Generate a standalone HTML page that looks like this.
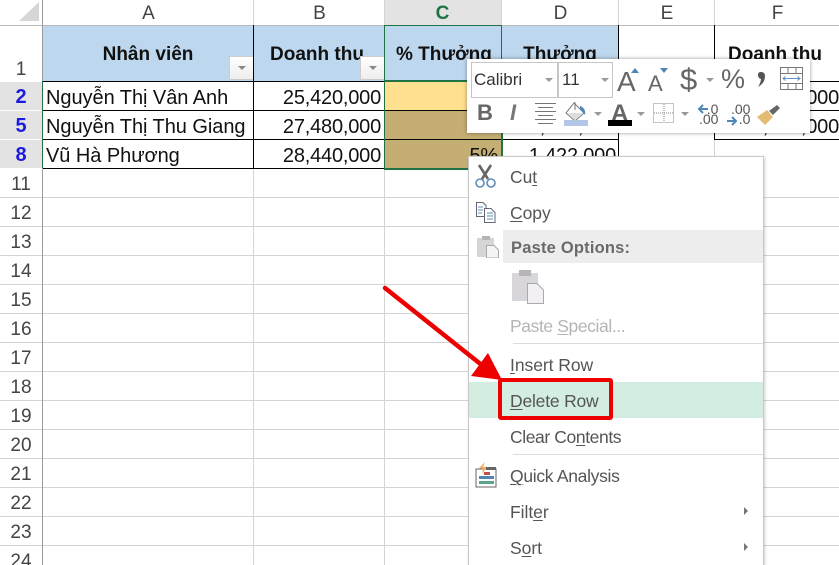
<!DOCTYPE html>
<html><head><meta charset="utf-8">
<style>
html,body{margin:0;padding:0;background:#fff}
#p{position:relative;width:839px;height:565px;overflow:hidden;background:#fff;font-family:"Liberation Sans",sans-serif;color:#000}
.a{position:absolute}
.t{position:absolute;white-space:nowrap;line-height:1}
.hl{position:absolute;left:0;width:839px;height:1px;background:#d4d4d4}
.vl{position:absolute;top:25px;width:1px;height:540px;background:#d4d4d4}
.bk{position:absolute;background:#000}
.col{position:absolute;top:4px;height:20px;font-size:19px;color:#444;text-align:center;line-height:20px}
.row{position:absolute;left:0;width:42px;text-align:center;font-size:19px;color:#444;line-height:20px;height:20px}
.rs{position:absolute;left:0;width:42px;height:28px;background:#e3e3e3;text-align:center;font-size:20px;font-weight:bold;color:#1a1ae0;line-height:30px}
.c{position:absolute;font-size:20px;line-height:20px;white-space:nowrap;color:#111;letter-spacing:-.05px}
.n{position:absolute;font-size:20px;line-height:20px;white-space:nowrap;color:#111;text-align:right;letter-spacing:-.2px}
.h{position:absolute;font-size:19px;font-weight:bold;line-height:20px;white-space:nowrap;color:#111;text-align:center}
.m{position:absolute;left:510px;font-size:17.5px;line-height:20px;white-space:nowrap;color:#555;letter-spacing:-.05px}
.m u{text-underline-offset:2px;text-decoration-thickness:1px}
.fb{position:absolute;background:linear-gradient(#fff,#eeeeee);border:1px solid #ccc;box-sizing:border-box}
.fb:after{content:"";position:absolute;left:8px;top:9px;border:4px solid transparent;border-top:4px solid #888;border-bottom:0}
.dd{position:absolute;border:4px solid transparent;border-top:4px solid #999;border-bottom:0;width:0;height:0}
</style></head>
<body><div id="p">

<!-- header bar -->
<div class="a" style="left:0;top:0;width:839px;height:25px;background:#fff"></div>
<div class="a" style="left:384px;top:0;width:117px;height:25px;background:#e3e3e3"></div>
<svg class="a" style="left:0;top:0" width="42" height="25"><polygon points="19,21 39,21 39,2" fill="#d6d6d6"/></svg>
<div class="col" style="left:43px;width:211px">A</div>
<div class="col" style="left:254px;width:131px">B</div>
<div class="col" style="left:384px;width:117px;font-weight:bold;color:#217346">C</div>
<div class="col" style="left:502px;width:117px">D</div>
<div class="col" style="left:619px;width:96px">E</div>
<div class="col" style="left:715px;width:125px">F</div>

<!-- grid lines -->
<div class="hl" style="top:25px;background:#bbb"></div>
<div class="hl" style="top:197px"></div><div class="hl" style="top:226px"></div><div class="hl" style="top:255px"></div><div class="hl" style="top:284px"></div><div class="hl" style="top:313px"></div><div class="hl" style="top:342px"></div><div class="hl" style="top:371px"></div><div class="hl" style="top:400px"></div><div class="hl" style="top:429px"></div><div class="hl" style="top:458px"></div><div class="hl" style="top:487px"></div><div class="hl" style="top:516px"></div><div class="hl" style="top:545px"></div>
<div class="vl" style="left:253px;top:0;height:565px"></div>
<div class="vl" style="left:384px;top:0;height:565px"></div>
<div class="vl" style="left:501px;top:0;height:565px"></div>
<div class="vl" style="left:618px;top:0;height:565px"></div>
<div class="vl" style="left:714px;top:0;height:565px"></div>
<div class="a" style="left:42px;top:0;width:1px;height:565px;background:#9a9a9a"></div>

<!-- row headers -->
<div class="row" style="top:60px">1</div>
<div class="rs" style="top:82px;line-height:31px">2</div>
<div class="rs" style="top:111px;line-height:31px">5</div>
<div class="rs" style="top:140px;line-height:31px">8</div>
<div class="row" style="top:175px">11</div><div class="row" style="top:204px">12</div><div class="row" style="top:233px">13</div><div class="row" style="top:262px">14</div><div class="row" style="top:291px">15</div><div class="row" style="top:320px">16</div><div class="row" style="top:349px">17</div><div class="row" style="top:378px">18</div><div class="row" style="top:407px">19</div><div class="row" style="top:436px">20</div><div class="row" style="top:465px">21</div><div class="row" style="top:494px">22</div><div class="row" style="top:523px">23</div><div class="row" style="top:552px">24</div>

<!-- table header fill -->
<div class="a" style="left:43px;top:26px;width:458px;height:55px;background:#bdd7ee"></div>
<div class="a" style="left:501px;top:26px;width:117px;height:55px;background:#bdd7ee"></div>
<div class="h" style="left:43px;width:210px;top:45px">Nhân viên</div>
<div class="h" style="left:254px;width:130px;top:45px;text-align:left;text-indent:16px">Doanh thu</div>
<div class="h" style="left:385px;width:116px;top:45px;text-align:left;text-indent:11px">% Thưởng</div>
<div class="h" style="left:502px;width:116px;top:45px">Thưởng</div>
<div class="h" style="left:715px;width:124px;top:45px;text-align:left;text-indent:13px">Doanh thu</div>
<div class="fb" style="left:229px;top:56px;width:25px;height:24px"></div>
<div class="fb" style="left:360px;top:56px;width:25px;height:24px"></div>

<!-- C cells -->
<div class="a" style="left:385px;top:81px;width:116px;height:29px;background:#ffe08f"></div>
<div class="a" style="left:385px;top:110px;width:116px;height:58px;background:#c4ae73"></div>

<!-- black lines -->
<div class="bk" style="left:43px;top:81px;width:575px;height:1px"></div>
<div class="bk" style="left:43px;top:110px;width:575px;height:1px"></div>
<div class="bk" style="left:43px;top:139px;width:575px;height:1px"></div>
<div class="bk" style="left:43px;top:168px;width:575px;height:1px"></div>
<div class="bk" style="left:253px;top:25px;width:1px;height:143px"></div>
<div class="bk" style="left:501px;top:25px;width:1px;height:143px"></div>
<div class="bk" style="left:618px;top:25px;width:1px;height:143px"></div>
<div class="bk" style="left:714px;top:25px;width:1px;height:114px"></div>
<div class="bk" style="left:714px;top:81px;width:125px;height:1px"></div>
<div class="bk" style="left:714px;top:110px;width:125px;height:1px"></div>
<div class="bk" style="left:714px;top:139px;width:125px;height:1px"></div>

<!-- green selection -->
<div class="a" style="left:384px;top:25px;width:118px;height:1px;background:#217346"></div>
<div class="a" style="left:384px;top:25px;width:1px;height:145px;background:#217346"></div>
<div class="a" style="left:501px;top:25px;width:1px;height:56px;background:#217346"></div>
<div class="a" style="left:384px;top:80px;width:118px;height:2px;background:#217346"></div>
<div class="a" style="left:384px;top:168px;width:118px;height:2px;background:#217346"></div>
<div class="a" style="left:501px;top:80px;width:2px;height:90px;background:#217346"></div>
<div class="a" style="left:42px;top:81px;width:1px;height:87px;background:#217346"></div>

<!-- data -->
<div class="c" style="left:46px;top:88px">Nguyễn Thị Vân Anh</div>
<div class="c" style="left:46px;top:117px">Nguyễn Thị Thu Giang</div>
<div class="c" style="left:46px;top:146px">Vũ Hà Phương</div>
<div class="n" style="right:458px;top:88px">25,420,000</div>
<div class="n" style="right:458px;top:117px">27,480,000</div>
<div class="n" style="right:458px;top:146px">28,440,000</div>
<div class="n" style="right:341px;top:146px">5%</div>
<div class="n" style="right:223px;top:146px">1,422,000</div>
<div class="n" style="right:223px;top:117px">1,374,000</div>
<div class="n" style="right:0;top:88px">25,420,000</div>
<div class="n" style="right:0;top:117px">27,480,000</div>

<!-- mini toolbar -->
<div class="a" style="left:467px;top:59px;width:343px;height:74px;background:#fff;box-shadow:0 0 4px rgba(0,0,0,.4)"></div>
<div class="a" style="left:471px;top:62px;width:87px;height:36px;border:1px solid #c6c6c6;box-sizing:border-box"></div>
<div class="a" style="left:558px;top:62px;width:55px;height:36px;border:1px solid #c6c6c6;box-sizing:border-box"></div>
<div class="t" style="left:474px;top:71px;font-size:17px;color:#333">Calibri</div>
<div class="t" style="left:562px;top:71px;font-size:17px;color:#333">11</div>
<div class="dd" style="left:545px;top:78px"></div>
<div class="dd" style="left:601px;top:78px"></div>
<div class="t" style="left:617px;top:68px;font-size:28px;color:#666">A</div>
<svg class="a" style="left:631px;top:68px" width="8" height="6"><polygon points="0,5 4,0 8,5" fill="#4f86b5"/></svg>
<div class="t" style="left:648px;top:73px;font-size:22px;color:#666">A</div>
<svg class="a" style="left:660px;top:68px" width="8" height="6"><polygon points="0,0 4,5 8,0" fill="#4f86b5"/></svg>
<div class="t" style="left:680px;top:64px;font-size:31px;color:#666">$</div>
<div class="dd" style="left:706px;top:78px"></div>
<div class="t" style="left:721px;top:66px;font-size:27px;color:#666;letter-spacing:-2px">%</div>
<svg class="a" style="left:756px;top:72px" width="11" height="16"><path d="M2 2.500Q2 0 5 0Q9 0 9 4Q9 11 2 15Q5 10 5 7Q2 6.500 2 2.500Z" fill="#555"/></svg>
<svg class="a" style="left:780px;top:67px" width="25" height="25" fill="none" stroke="#777">
<rect x=".5" y=".5" width="22" height="22"/><path d="M1 6.500H22M1 16.500H22M8 1V6M16 1V6M8 17V22M16 17V22"/>
<path d="M3 11.500H20M5.500 9.500L3 11.500L5.500 13.500M17.500 9.500L20 11.500L17.500 13.500" stroke="#5b93c4"/></svg>
<div class="t" style="left:477px;top:102px;font-size:22px;font-weight:bold;color:#666">B</div>
<div class="t" style="left:510px;top:102px;font-size:22px;font-weight:bold;font-style:italic;color:#777">I</div>
<svg class="a" style="left:535px;top:102px" width="22" height="23" stroke="#777"><path d="M0 1.500H21M3 5.500H18M0 9.500H21M3 13.500H18M0 17.500H21M3 21.500H18"/></svg>
<svg class="a" style="left:563px;top:101px" width="26" height="26">
<path d="M11 2L21 12L12 20L3 12Z" fill="#fff" stroke="#777"/><path d="M5 12H19L12 19Z" fill="#ddd"/><path d="M12 1V9" stroke="#777"/><path d="M17 5Q23 7 22 14Q19 10 17 8Z" fill="#4f86b5"/>
<rect x="1" y="19" width="24" height="6" fill="#b4c6e7"/></svg>
<div class="dd" style="left:594px;top:112px"></div>
<div class="t" style="left:611px;top:102px;font-size:24px;color:#666;font-weight:bold">A</div>
<div class="a" style="left:608px;top:120px;width:24px;height:6px;background:#000"></div>
<div class="dd" style="left:637px;top:112px"></div>
<svg class="a" style="left:653px;top:103px" width="22" height="21" fill="none" stroke="#888" stroke-dasharray="1 1"><rect x=".5" y=".5" width="20" height="19"/><path d="M11 1V20M1 10H20"/></svg>
<div class="dd" style="left:681px;top:112px"></div>
<div class="t" style="left:699px;top:102px;font-size:14px;color:#555">&nbsp;&nbsp;.0</div>
<div class="t" style="left:699px;top:112px;font-size:14px;color:#555">.00</div>
<div class="t" style="left:731px;top:102px;font-size:14px;color:#555">.00</div>
<div class="t" style="left:731px;top:112px;font-size:14px;color:#555">&nbsp;&nbsp;.0</div>
<svg class="a" style="left:697px;top:104px" width="12" height="10" fill="none" stroke="#4f86b5" stroke-width="2"><path d="M11 5H2M6 1L2 5L6 9"/></svg>
<svg class="a" style="left:726px;top:116px" width="12" height="10" fill="none" stroke="#4f86b5" stroke-width="2"><path d="M1 5H10M6 1L10 5L6 9"/></svg>
<svg class="a" style="left:756px;top:103px" width="25" height="23"><path d="M1 14L11 7L17 14L9 22Q5 18 1 14Z" fill="#e4bb72"/><path d="M13 8L21 2L24 5L17 12Z" fill="#666"/></svg>

<!-- context menu -->
<div class="a" style="left:468px;top:156px;width:296px;height:420px;background:#fff;border:1px solid #c8c8c8;box-sizing:border-box;box-shadow:1px 1px 3px rgba(0,0,0,.18)"></div>
<div class="a" style="left:503px;top:230px;width:260px;height:33px;background:#ededed"></div>
<div class="a" style="left:469px;top:382px;width:294px;height:36px;background:#d3ede0"></div>
<div class="a" style="left:513px;top:343px;width:250px;height:1px;background:#dcdcdc"></div>
<div class="a" style="left:513px;top:454px;width:250px;height:1px;background:#dcdcdc"></div>

<div class="m" style="top:167px"><span>Cu</span><u>t</u></div>
<div class="m" style="top:203px"><u>C</u>opy</div>
<div class="m" style="top:238px;left:511px;font-weight:bold;color:#6a6a6a;font-size:16.500px;letter-spacing:.2px">Paste Options:</div>
<div class="m" style="top:316px;color:#b5b5b5;letter-spacing:-.4px">Paste <u>S</u>pecial...</div>
<div class="m" style="top:355px"><u>I</u>nsert Row</div>
<div class="m" style="top:391px;letter-spacing:-.2px"><u>D</u>elete Row</div>
<div class="m" style="top:427px;letter-spacing:-.4px">Clear Co<u>n</u>tents</div>
<div class="m" style="top:466px;letter-spacing:-.3px"><u>Q</u>uick Analysis</div>
<div class="m" style="top:502px">Filt<u>e</u>r</div>
<div class="m" style="top:538px">S<u>o</u>rt</div>
<svg class="a" style="left:743px;top:506px" width="6" height="10"><polygon points="1,1 5,5 1,9" fill="#777"/></svg>
<svg class="a" style="left:743px;top:542px" width="6" height="10"><polygon points="1,1 5,5 1,9" fill="#777"/></svg>

<!-- menu icons -->
<svg class="a" style="left:474px;top:164px" width="22" height="24" fill="none"><path d="M5 1L14 15M17 1L8 15" stroke="#666" stroke-width="2.600"/><circle cx="6" cy="19" r="4" stroke="#5b8db8" stroke-width="1.600"/><circle cx="17" cy="19" r="4" stroke="#5b8db8" stroke-width="1.600"/></svg>
<svg class="a" style="left:475px;top:201px" width="22" height="22" fill="#fff" stroke="#667"><path d="M1.500 1.500H8L11 4.500V15.500H1.500Z"/><path d="M3 6H8M3 9H8M3 12H7" stroke="#5b8db8"/><path d="M9.500 7.500H16L20 11.500V21.500H9.500Z"/><path d="M12 12H18M12 15H18M12 18H18" stroke="#5b8db8"/></svg>
<svg class="a" style="left:476px;top:234px" width="24" height="24"><rect x="1" y="4" width="17" height="19" fill="#d6d6d6"/><rect x="6" y="2" width="8" height="4" fill="#b5b5b5"/><path d="M10.500 11.500H18L22.500 16V24H10.500Z" fill="#f4f4f4" stroke="#aaa"/></svg>
<svg class="a" style="left:511px;top:268px" width="34" height="36"><rect x="1" y="5" width="26" height="28" fill="#d8d6da"/><rect x="8" y="2" width="12" height="6" fill="#b5b5b5"/><path d="M16.500 15.500H26L32.500 22V35.500H16.500Z" fill="#f2f0f4" stroke="#aaa"/></svg>
<svg class="a" style="left:474px;top:462px" width="24" height="26"><rect x="2" y="7" width="20" height="18" fill="#fff" stroke="#666"/><path d="M5 6L11 0L9 5H13L8 12L9 7Z" fill="#efb05c"/><rect x="12" y="5" width="10" height="3" fill="#666"/><rect x="10" y="10" width="6" height="3" fill="#c0504d"/><rect x="5" y="14" width="15" height="3" fill="#4f86b5"/><rect x="5" y="19" width="15" height="3" fill="#5ba58a"/></svg>

<!-- annotations -->
<svg class="a" style="left:0;top:0" width="839" height="565">
<path d="M385 288L488 370" stroke="#ee0000" stroke-width="4.500" stroke-linecap="round"/>
<polygon points="488,353 471,376 502,380" fill="#ee0000"/>
</svg>
<div class="a" style="left:498px;top:378px;width:115px;height:42px;border:4px solid #ee0000;box-sizing:border-box;border-radius:3px"></div>
</div></body></html>
